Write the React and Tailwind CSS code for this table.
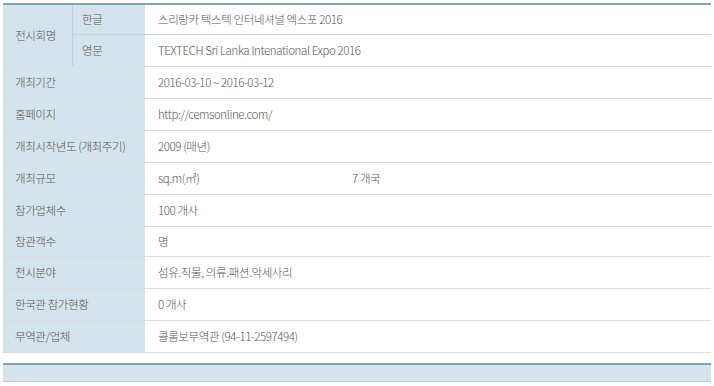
import React from 'react';

const rows = [
    { label: '개최기간', value: '2016-03-10 ~ 2016-03-12' },
    { label: '홈페이지', value: 'http://cemsonline.com/' },
    { label: '개최시작년도 (개최주기)', value: '2009 (매년)' },
    { label: '개최규모', value: 'sq.m(㎡)', extra: '7 개국' },
    { label: '참가업체수', value: '100 개사' },
    { label: '참관객수', value: '명', short: true },
    { label: '전시분야', value: '섬유.직물, 의류.패션.악세사리' },
    { label: '한국관 참가현황', value: '0 개사' },
    { label: '무역관/업체', value: '콜롬보무역관 (94-11-2597494)' },
];

export default function App() {
    return (
        <div
            className="w-[714px] h-[386px] bg-white pt-[3px] px-[3px] text-[11.5px] font-light tracking-[-0.4px] text-[#555] overflow-hidden"
            style={{ fontFamily: '"Noto Sans CJK KR", "Noto Sans", sans-serif' }}
        >
            <div className="border-t-2 border-[#7ea6b6]">
                <div className="flex border-b border-[#dcdcdc]">
                    <div className="w-[70px] bg-[#d5e3ed] border-r border-[#bfd0dc] flex items-center justify-center pr-[4px]">
                        전시회명
                    </div>
                    <div className="flex-1 flex flex-col">
                        <div className="flex h-[30px] border-b border-[#c4d4df]">
                            <div className="w-[72px] bg-[#d5e3ed] flex items-center pl-[9px]">한글</div>
                            <div className="flex-1 flex items-center pl-[13px]">
                                스리랑카 텍스텍 인터네셔널 엑스포 2016
                            </div>
                        </div>
                        <div className="flex h-[31px]">
                            <div className="w-[72px] bg-[#d5e3ed] flex items-center pl-[9px]">영문</div>
                            <div className="flex-1 flex items-center pl-[13px]">
                                TEXTECH Sri Lanka Intenational Expo 2016
                            </div>
                        </div>
                    </div>
                </div>
                {rows.map((r) => (
                    <div
                        key={r.label}
                        className={`flex border-b border-[#dcdcdc] ${r.short ? 'h-[30px]' : 'h-[32px]'}`}
                    >
                        <div className="w-[142px] bg-[#d5e3ed] flex items-center pl-[12px]">{r.label}</div>
                        <div className="flex-1 flex items-center pl-[13px]">
                            <span className="w-[194px]">{r.value}</span>
                            {r.extra && <span>{r.extra}</span>}
                        </div>
                    </div>
                ))}
            </div>
            <div className="mt-[10px] h-[19px] bg-[#d5e3ed] border-t-2 border-[#7ea6b6] border-b border-b-[#b9cdd9]" />
        </div>
    );
}
